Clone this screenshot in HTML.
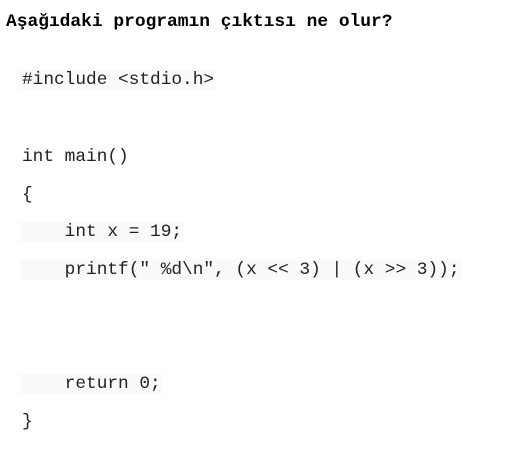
<!DOCTYPE html>
<html><head><meta charset="utf-8"><style>
body{margin:0;width:508px;height:450px;background:#fff;position:relative;font-family:"Liberation Mono",monospace;color:#222;overflow:hidden}
.t{position:absolute;left:6px;top:12px;font-weight:bold;font-size:17.9px;line-height:20px;white-space:pre;color:#000}
.l{position:absolute;left:20px;font-size:17.8px;line-height:20px;white-space:pre;background:#fafafa;padding-left:2px;padding-right:2px}
</style></head><body>
<div class="t">Aşağıdaki programın çıktısı ne olur?</div>
<div class="l" style="top:70px">#include &lt;stdio.h&gt;</div>
<div class="l" style="top:147px;background:none">int main()</div>
<div class="l" style="top:185px;background:none">{</div>
<div class="l" style="top:222px">    int x = 19;</div>
<div class="l" style="top:260px">    printf(" %d\n", (x &lt;&lt; 3) | (x &gt;&gt; 3));</div>
<div class="l" style="top:374px">    return 0;</div>
<div class="l" style="top:412px;background:none">}</div>
</body></html>
